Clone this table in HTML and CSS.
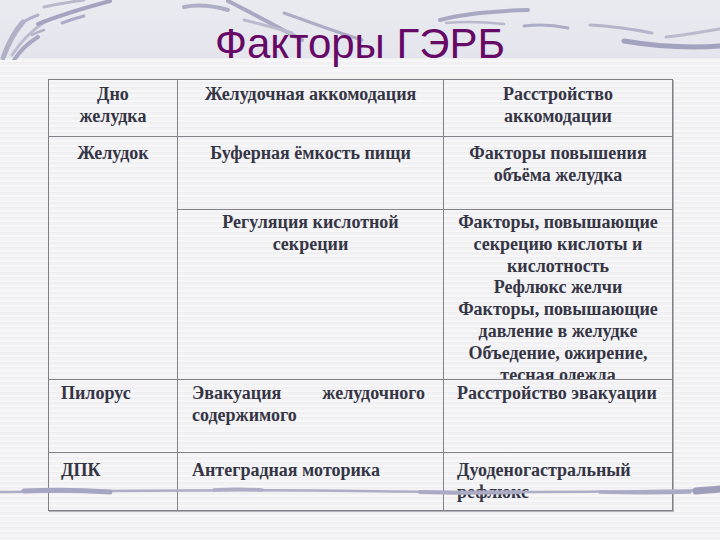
FILE: index.html
```html
<!DOCTYPE html>
<html lang="ru">
<head>
<meta charset="utf-8">
<title>Факторы ГЭРБ</title>
<link rel="stylesheet" href="styles.css">
</head>
<body>
<div class="slide">
  <header class="head">
    <svg class="deco-top" width="720" height="60" viewBox="0 0 720 60" aria-hidden="true">
      <g fill="none" stroke-linecap="round">
        <path d="M3 58 C8 44 14 32 23 22" stroke="#b0b0c6" stroke-width="5"/>
        <path d="M12 55 C20 43 32 30 46 21" stroke="#bcbcd0" stroke-width="3"/>
        <path d="M14 60 C20 51 28 43 38 37" stroke="#a8a8c2" stroke-width="4"/>
        <path d="M20 24 C26 20 32 17 38 15" stroke="#b0b0c8" stroke-width="3"/>
        <path d="M38 24 C60 15 84 8 110 1" stroke="#a4a4c0" stroke-width="4"/>
        <path d="M62 23 C70 20 76 18 84 16" stroke="#acacc6" stroke-width="3"/>
        <path d="M44 7 C58 4 70 2 84 0" stroke="#b8b8cc" stroke-width="3"/>
        <path d="M32 35 C36 33 40 31 44 30" stroke="#b0b0c8" stroke-width="2.5"/>
        <path d="M184 7 C198 4 214 6 228 10" stroke="#aeaec6" stroke-width="4"/>
        <path d="M228 1 C250 12 276 26 302 40" stroke="#a8a8c2" stroke-width="4"/>
        <path d="M244 20 C260 24 276 28 292 33" stroke="#babace" stroke-width="3"/>
        <path d="M284 13 C310 22 336 32 362 40" stroke="#acacc6" stroke-width="3"/>
        <path d="M440 20 C462 14 490 11 528 10" stroke="#a8a8c2" stroke-width="4"/>
        <path d="M446 23 C466 21 486 22 504 24" stroke="#b8b8cc" stroke-width="2.5"/>
        <path d="M524 26 C540 24 554 25 568 28" stroke="#acacc6" stroke-width="3"/>
        <path d="M590 25 C612 26 632 29 652 33" stroke="#b4b4ca" stroke-width="3"/>
        <path d="M624 41 C654 46 690 48 720 46" stroke="#a2a2be" stroke-width="5"/>
        <path d="M666 37 C684 35 700 32 720 29" stroke="#babace" stroke-width="3"/>
      </g>
    </svg>
    <h1 class="title">Факторы ГЭРБ</h1>
  </header>

  <div class="grid">
    <div class="cell center r1">Дно<br>желудка</div>
    <div class="cell center r1">Желудочная аккомодация</div>
    <div class="cell center r1 last">Расстройство<br>аккомодации</div>

    <div class="cell center r2 span2">Желудок</div>
    <div class="cell center r2">Буферная ёмкость пищи</div>
    <div class="cell center r2 last">Факторы повышения<br>объёма желудка</div>

    <div class="cell center r3">Регуляция кислотной<br>секреции</div>
    <div class="cell center r3 last clip">Факторы, повышающие<br>секрецию кислоты и<br>кислотность<br>Рефлюкс желчи<br>Факторы, повышающие<br>давление в желудке<br>Объедение, ожирение,<br>тесная одежда</div>

    <div class="cell left r4 c1">Пилорус</div>
    <div class="cell justify r4 c2">Эвакуация желудочного содержимого</div>
    <div class="cell left r4 c3 last">Расстройство эвакуации</div>

    <div class="cell left r5 c1 bottom">ДПК</div>
    <div class="cell left r5 c2 bottom">Антеградная моторика</div>
    <div class="cell left r5 c3 bottom last">Дуоденогастральный рефлюкс</div>
  </div>

  <svg class="wave" width="720" height="14" viewBox="0 0 720 14" aria-hidden="true">
    <g fill="none" stroke-linecap="round">
      <path d="M0 8 C120 7 240 5 360 7 S600 8 720 6" stroke="#adadc8" stroke-width="2.5"/>
      <path d="M24 7 C50 6 80 6 110 8" stroke="#a6a6c2" stroke-width="5"/>
      <path d="M214 6 C230 5 246 5 262 6" stroke="#adadc8" stroke-width="3.5"/>
      <path d="M420 8 C450 9 480 9 520 8" stroke="#aaaac4" stroke-width="4"/>
      <path d="M600 8 C630 9 660 9 690 8" stroke="#aaaac4" stroke-width="3.5"/>
      <path d="M696 7 C704 6 712 6 720 5" stroke="#9e9eba" stroke-width="7"/>
    </g>
  </svg>
</div>
</body>
</html>
```

FILE: styles.css
```css
* { box-sizing: border-box; }

html, body {
  margin: 0;
  padding: 0;
  background: #f3f3f5;
}

.slide {
  position: relative;
  width: 720px;
  height: 540px;
  overflow: hidden;
  background:
    repeating-linear-gradient(180deg, rgba(255,255,255,0.35) 0 2px, rgba(228,228,234,0.22) 2px 3px, rgba(255,255,255,0) 3px 5px),
    #f2f2f4;
}

.head {
  position: relative;
  height: 58px;
  background: linear-gradient(180deg, #eaeaf1 0%, #e4e4ec 100%);
}

.deco-top {
  position: absolute;
  left: 0;
  top: 0;
}

.title {
  position: relative;
  margin: 0;
  padding-top: 23px;
  font-family: "Liberation Sans", Arial, sans-serif;
  font-weight: normal;
  font-size: 42px;
  line-height: 42px;
  color: #660866;
  text-align: center;
}

.grid {
  display: grid;
  grid-template-columns: 129px 266px 228px;
  grid-template-rows: 57px 73px 170px 73px 57px;
  width: 625px;
  margin: 21px 0 0 48px;
  border: 1px solid #7e7e84;
  box-shadow: 1px 1px 0 #b4b4ba;
  font-family: "Liberation Serif", "DejaVu Serif", "Times New Roman", serif;
  font-weight: bold;
  font-size: 18px;
  line-height: 22px;
  color: #353545;
}

.cell {
  border-right: 1px solid #828288;
  border-bottom: 1px solid #828288;
  padding: 4px 4px 0 4px;
  overflow: hidden;
}

.cell.last { border-right: none; }
.cell.bottom { border-bottom: none; }

.center { text-align: center; white-space: nowrap; }
.left { text-align: left; }
.justify { text-align: justify; }

.r1 { padding-top: 3px; }
.r2 { padding-top: 5px; }
.r3 { padding-top: 2px; line-height: 21.8px; }
.r4 { padding-top: 2px; }
.r5 { padding-top: 6px; }

.c1 { padding-left: 12px; padding-right: 6px; }
.c2 { padding-left: 14px; padding-right: 18px; }
.c3 { padding-left: 13px; padding-right: 4px; }

.span2 { grid-row: span 2; }

.wave {
  position: absolute;
  left: 0;
  top: 484px;
}
```
